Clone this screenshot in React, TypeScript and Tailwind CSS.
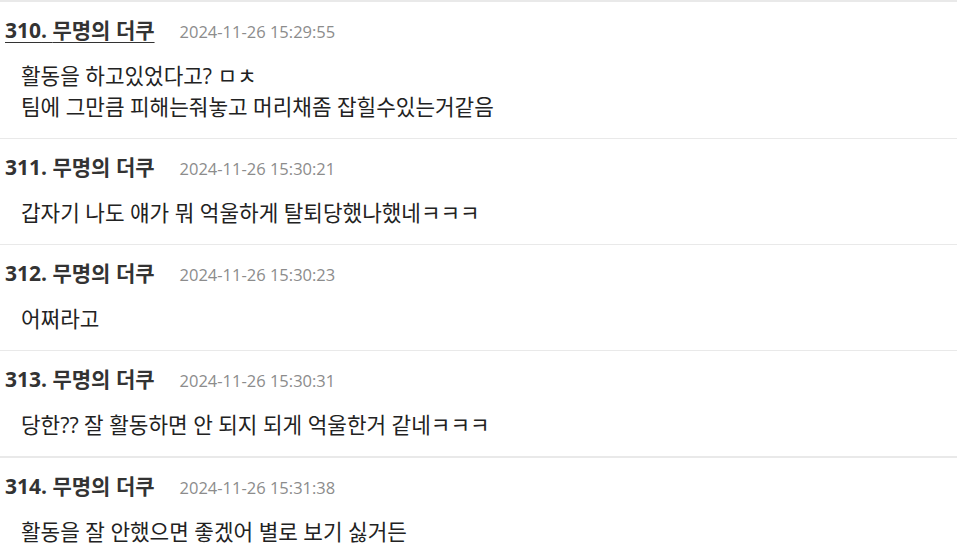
const font = {
  fontFamily: '"Open Sans", "Noto Sans CJK KR", sans-serif',
};

type Comment = {
  no: number;
  name: string;
  date: string;
  lines: string[];
  hover?: boolean;
  thick?: boolean;
};

const comments: Comment[] = [
  {
    no: 310,
    name: "무명의 더쿠",
    date: "2024-11-26 15:29:55",
    lines: ["활동을 하고있었다고? ㅁㅊ", "팀에 그만큼 피해는줘놓고 머리채좀 잡힐수있는거같음"],
    hover: true,
    thick: true,
  },
  {
    no: 311,
    name: "무명의 더쿠",
    date: "2024-11-26 15:30:21",
    lines: ["갑자기 나도 얘가 뭐 억울하게 탈퇴당했나했네ㅋㅋㅋ"],
  },
  {
    no: 312,
    name: "무명의 더쿠",
    date: "2024-11-26 15:30:23",
    lines: ["어쩌라고"],
  },
  {
    no: 313,
    name: "무명의 더쿠",
    date: "2024-11-26 15:30:31",
    lines: ["당한?? 잘 활동하면 안 되지 되게 억울한거 같네ㅋㅋㅋ"],
  },
  {
    no: 314,
    name: "무명의 더쿠",
    date: "2024-11-26 15:31:38",
    lines: ["활동을 잘 안했으면 좋겠어 별로 보기 싫거든"],
    thick: true,
  },
];

function CommentRow({ c }: { c: Comment }) {
  return (
    <div
      className={`${c.thick ? "border-t-2" : "border-t"} border-[#e9e9e9] pt-[17px] pb-[16px]`}
    >
      <div className="flex h-6 items-center pl-[5px]">
        <span
          className={`text-[21px] font-bold text-[#333] ${
            c.hover ? "underline underline-offset-[4px] decoration-1" : ""
          }`}
        >
          {c.no}. {c.name}
        </span>
        <span className="ml-[25px] mt-[2px] text-[16.5px] text-[#8c8c8c]">{c.date}</span>
      </div>
      <div className="mt-[17px] pl-[21px] text-[21.3px] leading-[31px] text-[#222]">
        {c.lines.map((l) => (
          <div key={l}>{l}</div>
        ))}
      </div>
    </div>
  );
}

export default function App() {
  return (
    <div className="h-[554px] w-full overflow-hidden bg-white" style={font}>
      {comments.map((c) => (
        <CommentRow key={c.no} c={c} />
      ))}
    </div>
  );
}
